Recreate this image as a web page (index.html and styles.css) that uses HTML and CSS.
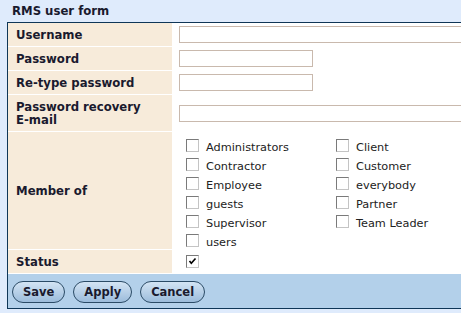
FILE: index.html
```html
<!DOCTYPE html>
<html lang="en">
<head>
    <meta charset="UTF-8">
    <title>RMS user form</title>
    <link rel="stylesheet" href="styles.css">
</head>
<body>

    <!-- title -->
    <div class="form-title">RMS user form</div>

    <!-- form box -->
    <div class="form-box">
        <div class="form-row">
            <div class="row-label">Username</div>
            <div class="row-field"><input type="text" class="input-wide"></div>
        </div>
        <div class="form-row">
            <div class="row-label">Password</div>
            <div class="row-field"><input type="password" class="input-short"></div>
        </div>
        <div class="form-row">
            <div class="row-label">Re-type password</div>
            <div class="row-field"><input type="password" class="input-short"></div>
        </div>
        <div class="form-row row-tall">
            <div class="row-label">Password recovery<br>E-mail</div>
            <div class="row-field"><input type="text" class="input-wide"></div>
        </div>
        <div class="form-row">
            <div class="row-label">Member of</div>
            <div class="row-field">
                <div class="group-list">
                    <label class="group"><input type="checkbox"> Administrators</label>
                    <label class="group"><input type="checkbox"> Client</label>
                    <label class="group"><input type="checkbox"> Contractor</label>
                    <label class="group"><input type="checkbox"> Customer</label>
                    <label class="group"><input type="checkbox"> Employee</label>
                    <label class="group"><input type="checkbox"> everybody</label>
                    <label class="group"><input type="checkbox"> guests</label>
                    <label class="group"><input type="checkbox"> Partner</label>
                    <label class="group"><input type="checkbox"> Supervisor</label>
                    <label class="group"><input type="checkbox"> Team Leader</label>
                    <label class="group"><input type="checkbox"> users</label>
                </div>
            </div>
        </div>
        <div class="form-row">
            <div class="row-label">Status</div>
            <div class="row-field"><input type="checkbox" class="status-check" checked></div>
        </div>

        <!-- buttons -->
        <div class="button-bar">
            <button class="form-button">Save</button>
            <button class="form-button">Apply</button>
            <button class="form-button">Cancel</button>
        </div>
    </div>

</body>
</html>
```

FILE: styles.css
```css
/* base */
body {
    margin: 0;
    padding: 0;
    background-color: #dfebfc;
    font-family: "DejaVu Sans", Verdana, sans-serif;
    font-size: 11.3px;
    color: #1a1a2e;
    overflow: hidden;
}

/* title */
.form-title {
    height: 21px;
    padding-top: 1px;
    line-height: 21px;
    padding-left: 12px;
    font-weight: bold;
    font-size: 11.7px;
}

/* box around the form */
.form-box {
    margin-left: 7px;
    width: 520px;
    border: 1px solid #0f3657;
    border-right: none;
    background-color: #fff;
}

/* one line of the form */
.form-row {
    display: grid;
    grid-template-columns: 165px 1fr;
    min-height: 23px;
    border-bottom: 1px solid #fff;
}

.row-tall {
    min-height: 36px;
}

.row-label {
    display: flex;
    align-items: center;
    padding: 1px 0 0 8px;
    background-color: #f7ebda;
    border-right: 1px solid #fff;
    font-weight: bold;
    font-size: 11.7px;
    line-height: 13px;
}

.row-field {
    display: flex;
    align-items: center;
    padding-left: 6px;
}

/* text inputs */
.input-wide,
.input-short {
    box-sizing: border-box;
    height: 17px;
    margin: 0;
    border: 1px solid #c9b9ad;
    background: #fff;
}

.input-wide {
    width: 330px;
}

.input-short {
    width: 134px;
}

/* group checkboxes */
.group-list {
    display: grid;
    grid-template-columns: 150px 150px;
    grid-auto-rows: 19px;
    box-sizing: border-box;
    align-self: flex-start;
    height: 117px;
    padding: 7px 0 0 7px;
}

.group {
    display: flex;
    align-items: flex-start;
    gap: 7px;
    color: #222;
    line-height: 17px;
}

input[type="checkbox"] {
    appearance: none;
    -webkit-appearance: none;
    width: 13px;
    height: 13px;
    margin: 0;
    border: 1px solid;
    border-color: #7a7a7a #c4c4c4 #c4c4c4 #7a7a7a;
    background: #fff;
    flex-shrink: 0;
}

.status-check {
    margin-left: 7px !important;
}

input[type="checkbox"]:checked {
    background-image: url("data:image/svg+xml;utf8,<svg xmlns='http://www.w3.org/2000/svg' viewBox='0 0 11 11'><path d='M2.5 5 L4.3 7.3 L8.5 2.5' fill='none' stroke='black' stroke-width='1.6'/></svg>");
    background-size: 11px 11px;
}

/* buttons */
.button-bar {
    display: flex;
    gap: 8px;
    padding: 7px 0 5px 4px;
    background-color: #b3d0ea;
}

.form-button {
    height: 22px;
    padding: 0 10px;
    font-family: "DejaVu Sans", Verdana, sans-serif;
    font-size: 11.5px;
    font-weight: bold;
    color: #1a1a2e;
    border: 1px solid #2b4b66;
    border-radius: 11px;
    background: linear-gradient(#d3e4f4, #9cbcdb);
    cursor: pointer;
}
```
